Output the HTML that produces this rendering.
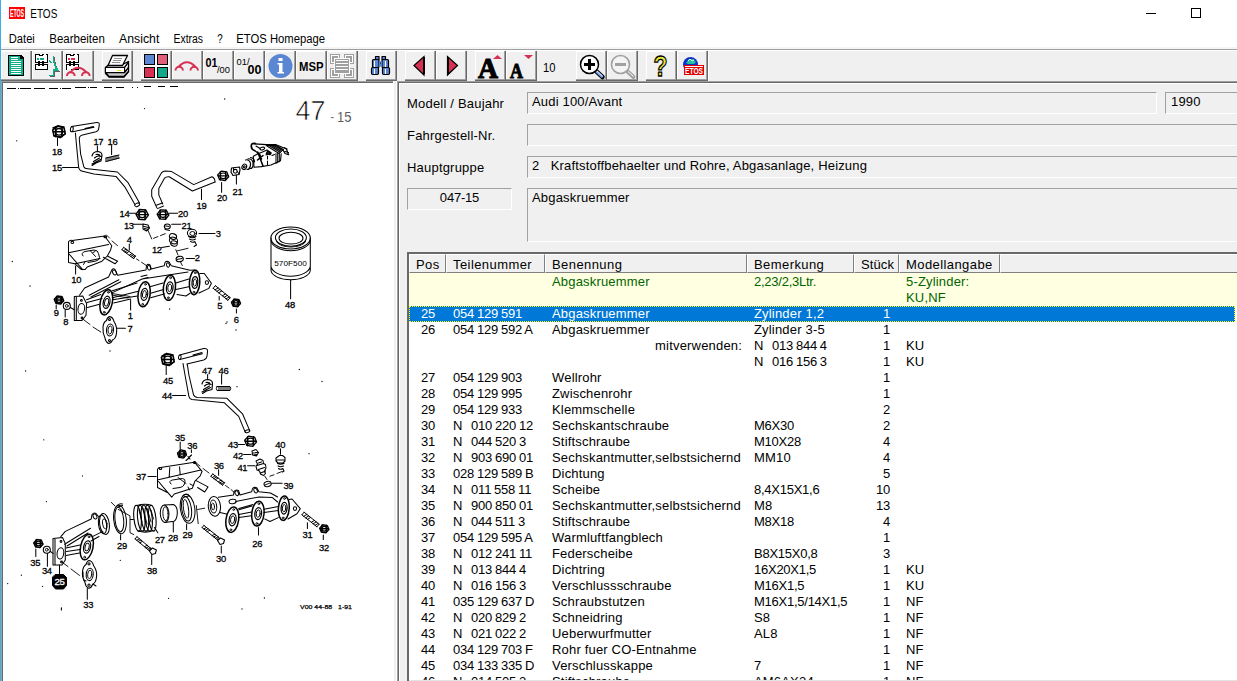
<!DOCTYPE html>
<html lang="de"><head><meta charset="utf-8"><title>ETOS</title>
<style>
*{box-sizing:border-box;margin:0;padding:0}
html,body{width:1237px;height:681px;overflow:hidden;background:#fff}
body{position:relative;font-family:"Liberation Sans",sans-serif;font-size:13px;color:#000}
.abs{position:absolute}
#edge{left:0;top:0;width:1px;height:681px;background:#3cb0ee}
#ticon{left:9px;top:7px;width:16px;height:12px;background:#f00;color:#fff;font-size:9px;line-height:12px;font-weight:bold;text-align:center;letter-spacing:-1px;overflow:hidden}
#title{left:30px;top:6px;font-size:12px;line-height:16px;letter-spacing:-1.2px}
.menu{top:31px;font-size:12px;line-height:16px;white-space:nowrap}
#tbar{left:1px;top:48px;width:1236px;height:33px;background:#f0f0f0;border-top:1px solid #a0a0a0}
.tb{position:absolute;top:51px;width:31px;height:30px;background:#f0f0f0;border-top:1px solid #fff;border-left:1px solid #fff;border-right:2px solid #808080;border-bottom:2px solid #808080}
.tb svg{position:absolute;left:0;top:0}
/* left panel */
#lp{left:1px;top:81px;width:392px;height:600px;background:#fff;border-top:1px solid #a0a0a0;border-left:1px solid #a0a0a0}
#lp:before{content:"";position:absolute;left:0;top:0;right:0;bottom:0;border-top:1px solid #696969;border-left:1px solid #696969}
#split{left:393px;top:81px;width:4px;height:600px;background:#f0f0f0;border-left:1px solid #fff;border-right:1px solid #fff}
#rp:after{content:"";position:absolute;left:1px;top:1px;right:0;bottom:0;border-top:1px solid #fff;border-left:1px solid #fff}
#rp{left:397px;top:81px;width:840px;height:600px;background:#f0f0f0;border-top:1px solid #a0a0a0;border-left:1px solid #a0a0a0}
#rp:before{content:"";position:absolute;left:0;top:0;right:0;bottom:0;border-top:1px solid #696969;border-left:1px solid #696969}
.lbl{font-size:13px;line-height:16px;letter-spacing:.2px;white-space:nowrap}
.fld{height:22px;border-top:1px solid #a0a0a0;border-left:1px solid #a0a0a0;border-bottom:1px solid #fff;border-right:1px solid #fff;font-size:13px;line-height:16px;padding:1px 0 0 4px;letter-spacing:.17px;white-space:nowrap;overflow:hidden}
/* list */
#lv{left:407px;top:252px;width:830px;height:429px;background:#fff;border-top:2px solid #696969;border-left:2px solid #696969}
.hd{position:absolute;top:254px;height:19px;background:#f0f0f0;border-top:1px solid #fff;border-left:1px solid #fff;border-right:1px solid #808080;border-bottom:1px solid #808080;font-size:13px;line-height:16px;padding:2px 0 0 6px;letter-spacing:.42px;white-space:nowrap}
.row{position:absolute;left:409px;width:826px;height:16px;font-size:13px;line-height:16px;white-space:nowrap;letter-spacing:.18px}
.row span{position:absolute;top:0}
.c1{left:0;width:26px;text-align:right;letter-spacing:-.23px}
.c2{left:44px;letter-spacing:-.23px;word-spacing:-.4px}
.c3{left:143px}
.c4{left:345px}
.c5{left:440px;width:41px;text-align:right;letter-spacing:-.23px}
.dg{letter-spacing:-.25px;word-spacing:-.4px}
.c6{left:497px}
.g{color:#006400}
.sel{background:#0078d7;color:#fff;outline:1px dotted #ff0;outline-offset:-1px}
</style></head><body>
<div id="edge" class="abs"></div>
<svg class="abs" style="left:0;top:0" width="400" height="47" viewBox="0 0 400 47" font-family="'Liberation Sans',sans-serif" font-size="12">
<rect x="9" y="7" width="16" height="12" fill="#f00"/>
<text x="10" y="17" font-size="10" font-weight="bold" fill="#fff" textLength="14" lengthAdjust="spacingAndGlyphs">ETOS</text>
<text x="30.300" y="17.500" textLength="27" lengthAdjust="spacingAndGlyphs">ETOS</text>
<text x="8.800" y="42.500" textLength="26" lengthAdjust="spacingAndGlyphs">Datei</text>
<text x="49.300" y="42.500" textLength="55.500" lengthAdjust="spacingAndGlyphs">Bearbeiten</text>
<text x="119" y="42.500" textLength="40.300" lengthAdjust="spacingAndGlyphs">Ansicht</text>
<text x="173.500" y="42.500" textLength="29.500" lengthAdjust="spacingAndGlyphs">Extras</text>
<text x="217.300" y="42.500" textLength="5.500" lengthAdjust="spacingAndGlyphs">?</text>
<text x="236.300" y="42.500" textLength="88.700" lengthAdjust="spacingAndGlyphs">ETOS Homepage</text>
</svg>
<!-- window controls -->
<div class="abs" style="left:1146px;top:13px;width:10px;height:1px;background:#000"></div>
<div class="abs" style="left:1191px;top:8px;width:10px;height:10px;border:1px solid #000"></div>
<svg class="abs" style="left:0;top:47px" width="1237" height="36" viewBox="0 47 1237 36" shape-rendering="crispEdges" font-family="'Liberation Sans',sans-serif">
<rect x="1" y="47" width="1236" height="2" fill="#f4f4f4"/>
<rect x="1" y="49" width="1236" height="1" fill="#a0a0a0"/>
<rect x="1" y="50" width="1236" height="1" fill="#fff"/>
<rect x="1" y="51" width="1236" height="30" fill="#f0f0f0"/>
<rect x="1" y="51" width="31" height="30" fill="#696969"/><rect x="1" y="51" width="30" height="29" fill="#a0a0a0"/><rect x="1" y="51" width="29" height="28" fill="#fff"/><rect x="2" y="52" width="28" height="27" fill="#f0f0f0"/>
<rect x="32" y="51" width="31" height="30" fill="#696969"/><rect x="32" y="51" width="30" height="29" fill="#a0a0a0"/><rect x="32" y="51" width="29" height="28" fill="#fff"/><rect x="33" y="52" width="28" height="27" fill="#f0f0f0"/>
<rect x="63" y="51" width="31" height="30" fill="#696969"/><rect x="63" y="51" width="30" height="29" fill="#a0a0a0"/><rect x="63" y="51" width="29" height="28" fill="#fff"/><rect x="64" y="52" width="28" height="27" fill="#f0f0f0"/>
<rect x="102" y="51" width="31" height="30" fill="#696969"/><rect x="102" y="51" width="30" height="29" fill="#a0a0a0"/><rect x="102" y="51" width="29" height="28" fill="#fff"/><rect x="103" y="52" width="28" height="27" fill="#f0f0f0"/>
<rect x="141" y="51" width="31" height="30" fill="#696969"/><rect x="141" y="51" width="30" height="29" fill="#a0a0a0"/><rect x="141" y="51" width="29" height="28" fill="#fff"/><rect x="142" y="52" width="28" height="27" fill="#f0f0f0"/>
<rect x="172" y="51" width="31" height="30" fill="#696969"/><rect x="172" y="51" width="30" height="29" fill="#a0a0a0"/><rect x="172" y="51" width="29" height="28" fill="#fff"/><rect x="173" y="52" width="28" height="27" fill="#f0f0f0"/>
<rect x="203" y="51" width="31" height="30" fill="#696969"/><rect x="203" y="51" width="30" height="29" fill="#a0a0a0"/><rect x="203" y="51" width="29" height="28" fill="#fff"/><rect x="204" y="52" width="28" height="27" fill="#f0f0f0"/>
<rect x="234" y="51" width="31" height="30" fill="#696969"/><rect x="234" y="51" width="30" height="29" fill="#a0a0a0"/><rect x="234" y="51" width="29" height="28" fill="#fff"/><rect x="235" y="52" width="28" height="27" fill="#f0f0f0"/>
<rect x="265" y="51" width="31" height="30" fill="#696969"/><rect x="265" y="51" width="30" height="29" fill="#a0a0a0"/><rect x="265" y="51" width="29" height="28" fill="#fff"/><rect x="266" y="52" width="28" height="27" fill="#f0f0f0"/>
<rect x="296" y="51" width="31" height="30" fill="#696969"/><rect x="296" y="51" width="30" height="29" fill="#a0a0a0"/><rect x="296" y="51" width="29" height="28" fill="#fff"/><rect x="297" y="52" width="28" height="27" fill="#f0f0f0"/>
<rect x="327" y="51" width="31" height="30" fill="#696969"/><rect x="327" y="51" width="30" height="29" fill="#a0a0a0"/><rect x="327" y="51" width="29" height="28" fill="#fff"/><rect x="328" y="52" width="28" height="27" fill="#f0f0f0"/>
<rect x="366" y="51" width="31" height="30" fill="#696969"/><rect x="366" y="51" width="30" height="29" fill="#a0a0a0"/><rect x="366" y="51" width="29" height="28" fill="#fff"/><rect x="367" y="52" width="28" height="27" fill="#f0f0f0"/>
<rect x="405" y="51" width="31" height="30" fill="#696969"/><rect x="405" y="51" width="30" height="29" fill="#a0a0a0"/><rect x="405" y="51" width="29" height="28" fill="#fff"/><rect x="406" y="52" width="28" height="27" fill="#f0f0f0"/>
<rect x="436" y="51" width="31" height="30" fill="#696969"/><rect x="436" y="51" width="30" height="29" fill="#a0a0a0"/><rect x="436" y="51" width="29" height="28" fill="#fff"/><rect x="437" y="52" width="28" height="27" fill="#f0f0f0"/>
<rect x="475" y="51" width="31" height="30" fill="#696969"/><rect x="475" y="51" width="30" height="29" fill="#a0a0a0"/><rect x="475" y="51" width="29" height="28" fill="#fff"/><rect x="476" y="52" width="28" height="27" fill="#f0f0f0"/>
<rect x="506" y="51" width="31" height="30" fill="#696969"/><rect x="506" y="51" width="30" height="29" fill="#a0a0a0"/><rect x="506" y="51" width="29" height="28" fill="#fff"/><rect x="507" y="52" width="28" height="27" fill="#f0f0f0"/>
<rect x="576" y="51" width="31" height="30" fill="#696969"/><rect x="576" y="51" width="30" height="29" fill="#a0a0a0"/><rect x="576" y="51" width="29" height="28" fill="#fff"/><rect x="577" y="52" width="28" height="27" fill="#f0f0f0"/>
<rect x="607" y="51" width="31" height="30" fill="#696969"/><rect x="607" y="51" width="30" height="29" fill="#a0a0a0"/><rect x="607" y="51" width="29" height="28" fill="#fff"/><rect x="608" y="52" width="28" height="27" fill="#f0f0f0"/>
<rect x="646" y="51" width="31" height="30" fill="#696969"/><rect x="646" y="51" width="30" height="29" fill="#a0a0a0"/><rect x="646" y="51" width="29" height="28" fill="#fff"/><rect x="647" y="52" width="28" height="27" fill="#f0f0f0"/>
<rect x="677" y="51" width="31" height="30" fill="#696969"/><rect x="677" y="51" width="30" height="29" fill="#a0a0a0"/><rect x="677" y="51" width="29" height="28" fill="#fff"/><rect x="678" y="52" width="28" height="27" fill="#f0f0f0"/>
<rect x="708" y="51" width="1" height="30" fill="#fff"/>
<path d="M8 55h13l3 3v18h-16z" fill="#000"/>
<path d="M9 56h11v3h3v16h-14z" fill="#12ae8c"/>
<rect x="11" y="57" width="7" height="1" fill="#fff"/>
<rect x="11" y="59" width="7" height="1" fill="#fff"/>
<rect x="11" y="61" width="10" height="1" fill="#fff"/>
<rect x="11" y="63" width="10" height="1" fill="#fff"/>
<rect x="11" y="65" width="10" height="1" fill="#fff"/>
<rect x="11" y="67" width="10" height="1" fill="#fff"/>
<rect x="11" y="69" width="10" height="1" fill="#fff"/>
<rect x="11" y="71" width="10" height="1" fill="#fff"/>
<rect x="11" y="73" width="10" height="1" fill="#fff"/>
<rect x="35.5" y="54.500" width="12" height="8" fill="#fff" stroke="#000"/><rect x="40" y="54" width="2" height="1" fill="#fff"/><rect x="44" y="54" width="2" height="1" fill="#fff"/><rect x="39" y="55" width="4" height="1" fill="#000"/><rect x="37" y="58" width="2" height="2" fill="#12ae8c"/><rect x="40" y="58" width="4" height="2" fill="#12ae8c"/><rect x="35.5" y="64.500" width="12" height="5" fill="#fff" stroke="#000"/><path d="M38 61h2v1h2v-1h2v5h-2v-1h-2v1h-2z" fill="#000"/><rect x="40" y="63" width="2" height="1" fill="#fff"/>
<path d="M54.500 57v5l1 2v1.500l1 1.500v1.500l1 1l1 1.500h-4v5.500h-5" fill="none" stroke="#606060" stroke-width="1.500"/>
<path d="M53.500 56v5l1 2v1.500l1 1.500v1.500l1 1l1 1.500h-4v5.500h-5" fill="none" stroke="#12ae8c" stroke-width="1.800"/>
<path d="M49.500 60.500l1.500 2.500" stroke="#12ae8c" stroke-width="1.500"/>
<rect x="66.5" y="54.500" width="12" height="8" fill="#fff" stroke="#000"/><rect x="71" y="54" width="2" height="1" fill="#fff"/><rect x="75" y="54" width="2" height="1" fill="#fff"/><rect x="70" y="55" width="4" height="1" fill="#000"/><rect x="68" y="58" width="2" height="2" fill="#d63052"/><rect x="71" y="58" width="4" height="2" fill="#d63052"/><rect x="66.5" y="64.500" width="12" height="5" fill="#fff" stroke="#000"/><path d="M69 61h2v1h2v-1h2v5h-2v-1h-2v1h-2z" fill="#000"/><rect x="71" y="63" width="2" height="1" fill="#fff"/>
<g shape-rendering="auto" fill="none" stroke="#d63052" stroke-width="2"><path d="M67 76a3.800 3.800 0 0 1 7.600 0"/><path d="M82 76a3.800 3.800 0 0 1 7.600 0"/><path d="M70 72.500q8 -9.500 16.500 0"/></g>
<rect x="67" y="69" width="4" height="2" fill="#f0f0f0"/>
<g shape-rendering="auto" stroke="#000" stroke-width="1.300" stroke-linejoin="round"><path d="M105.500 67.500l4 -3.500h14l5 -2.500v10l-4.500 5.500h-15l-3.500 -3.500z" fill="#fff"/><path d="M106 72.500h18l4 -5v4.500l-4.500 5h-14.500z" fill="#c8c8c8" stroke="none"/><path d="M105.500 67.500h19v5h-19zM124.500 67.500l4-5.500M124.500 72.500l4-5M105.500 72.500l3.500 4h15l4.500-5" fill="none"/><path d="M112.500 55.500h15l-5 10h-14.500z" fill="#fff"/></g>
<rect x="106" y="68" width="18" height="4" fill="#fff"/>
<rect x="117" y="70" width="4" height="1" fill="#e0e020"/>
<rect x="114" y="58" width="8" height="1" fill="#909090"/><rect x="113" y="60" width="8" height="1" fill="#909090"/><rect x="112" y="62" width="8" height="1" fill="#909090"/>
<rect x="143" y="53" width="26" height="26" fill="#fafafa"/>
<rect x="144" y="54" width="11" height="11" fill="#000"/><rect x="145" y="55" width="9" height="9" fill="#5b87d2"/>
<rect x="157" y="54" width="11" height="11" fill="#000"/><rect x="158" y="55" width="9" height="9" fill="#e0607c"/>
<rect x="144" y="67" width="11" height="11" fill="#000"/><rect x="145" y="68" width="9" height="9" fill="#d63052"/>
<rect x="157" y="67" width="11" height="11" fill="#000"/><rect x="158" y="68" width="9" height="9" fill="#10a888"/>
<g shape-rendering="auto" fill="none" stroke="#d63052" stroke-width="2"><path d="M175.500 70.500a3.700 3.700 0 0 1 7.400 0"/><path d="M190.500 70.500a3.700 3.700 0 0 1 7.400 0"/><path d="M178.500 67q8.500 -9.500 17 0"/></g>
<g shape-rendering="auto"><text x="205.500" y="67" font-size="12.500" font-weight="bold" textLength="12" lengthAdjust="spacingAndGlyphs">01</text><text x="217" y="73" font-size="8.500" textLength="13" lengthAdjust="spacingAndGlyphs">/00</text>
<text x="236.500" y="65" font-size="8.500" textLength="13" lengthAdjust="spacingAndGlyphs">01/</text><text x="247.500" y="74" font-size="12.500" font-weight="bold" textLength="14" lengthAdjust="spacingAndGlyphs">00</text></g>
<g shape-rendering="auto"><circle cx="280.500" cy="66" r="12" fill="#5b87d2"/><path d="M278.500 58h4v3h-4zM277.500 63h5v9h1.500v1.500h-6.500v-1.500h1.500v-7.500h-1.500z" fill="#fff"/></g>
<text shape-rendering="auto" x="299" y="70.500" font-size="12.500" font-weight="bold" textLength="24.500" lengthAdjust="spacingAndGlyphs">MSP</text>
<rect x="330" y="54" width="10" height="10" fill="#a0a0a0"/><rect x="331" y="55" width="8" height="8" fill="#fff"/><rect x="332" y="56" width="6" height="6" fill="#a0a0a0"/>
<rect x="344" y="54" width="10" height="10" fill="#a0a0a0"/><rect x="345" y="55" width="8" height="8" fill="#fff"/><rect x="346" y="56" width="6" height="6" fill="#a0a0a0"/>
<rect x="330" y="68" width="10" height="10" fill="#a0a0a0"/><rect x="331" y="69" width="8" height="8" fill="#fff"/><rect x="332" y="70" width="6" height="6" fill="#a0a0a0"/>
<rect x="344" y="68" width="10" height="10" fill="#a0a0a0"/><rect x="345" y="69" width="8" height="8" fill="#fff"/><rect x="346" y="70" width="6" height="6" fill="#a0a0a0"/>
<rect x="334" y="58" width="16" height="16" fill="#fff"/><rect x="335" y="59" width="14" height="14" fill="#a0a0a0"/><rect x="336" y="60" width="12" height="12" fill="#fff"/>
<rect x="336" y="61" width="12" height="2" fill="#a0a0a0"/>
<rect x="336" y="64" width="12" height="2" fill="#a0a0a0"/>
<rect x="336" y="67" width="12" height="2" fill="#a0a0a0"/>
<rect x="336" y="70" width="12" height="2" fill="#a0a0a0"/>
<g shape-rendering="auto" stroke="#000" stroke-width="1.200" fill="#5b87d2" stroke-linejoin="round"><rect x="375.500" y="56.500" width="3.500" height="3"/><rect x="382" y="56.500" width="3.500" height="3"/><rect x="372.500" y="59.500" width="6.500" height="8" rx="1"/><rect x="382" y="59.500" width="6.500" height="8" rx="1"/><rect x="379" y="61.500" width="3" height="5" stroke="none"/><rect x="380" y="62.500" width="1" height="1" fill="#000" stroke="none"/><rect x="371.500" y="67.500" width="7" height="7" rx="1.200"/><rect x="382.500" y="67.500" width="7" height="7" rx="1.200"/></g>
<rect x="374" y="61" width="1" height="6" fill="#fff"/>
<rect x="384.5" y="61" width="1" height="6" fill="#fff"/>
<rect x="373.5" y="68.500" width="1.200" height="5.500" fill="#fff"/>
<rect x="385" y="68.500" width="1.200" height="5.500" fill="#fff"/>
<g shape-rendering="auto" stroke="#000" stroke-width="1.200" fill="#d63052" stroke-linejoin="miter"><path d="M414 65.500l10 -9v18.500z"/><path d="M457.500 65.500l-10 -9v18.500z"/></g>
<rect x="423" y="57" width="2" height="17" fill="#000"/><rect x="447" y="57" width="2" height="17" fill="#000"/>
<g shape-rendering="auto" font-family="'Liberation Serif',serif" font-weight="bold"><text x="478" y="77.500" font-size="30" textLength="20" lengthAdjust="spacingAndGlyphs" stroke="#000" stroke-width="1.200">A</text><text x="510" y="77.500" font-size="21" textLength="13" lengthAdjust="spacingAndGlyphs" stroke="#000" stroke-width=".900">A</text></g>
<g shape-rendering="auto" fill="#d63052"><path d="M493 59l4.500 -4 4.500 4z"/><path d="M524 55h9l-4.500 4z"/></g>
<text shape-rendering="auto" x="543" y="71.700" font-size="12.500" textLength="12.500" lengthAdjust="spacingAndGlyphs">10</text>
<g shape-rendering="auto"><path d="M596 71l6.500 6" stroke="#000" stroke-width="4.500" stroke-linecap="round"/><path d="M596.500 71.500l5.500 5" stroke="#78a0e8" stroke-width="2.500" stroke-linecap="round"/><path d="M597 71l5.500 5" stroke="#fff" stroke-width="0.800"/><circle cx="589.500" cy="64.500" r="9" fill="#fff" stroke="#000" stroke-width="1.500"/></g>
<rect x="584" y="63" width="11" height="3" fill="#000"/><rect x="588" y="59" width="3" height="11" fill="#000"/>
<g shape-rendering="auto"><path d="M627 71l6.500 6" stroke="#a0a0a0" stroke-width="4" stroke-linecap="round"/><path d="M628 71.500l5.500 5" stroke="#fff" stroke-width="1"/><circle cx="620.500" cy="64.500" r="9" fill="#f4f4f4" stroke="#a0a0a0" stroke-width="1.600"/></g>
<rect x="615" y="63" width="11" height="3" fill="#a0a0a0"/>
<text shape-rendering="auto" x="653.500" y="76" font-size="29" font-weight="bold" fill="#e6e63c" stroke="#000" stroke-width="1.300" textLength="14" lengthAdjust="spacingAndGlyphs">?</text>
<g shape-rendering="auto"><circle cx="690.500" cy="64.500" r="7.500" fill="#1030c8"/><path d="M686 63l3-4h4l3 3-2 2h-6z" fill="#20c0a0"/><path d="M688 61l2-2 2 2 2-1" stroke="#d0ffe8" stroke-width="1" fill="none"/><rect x="684" y="65" width="20" height="10" fill="#e00000"/><rect x="685" y="66" width="18" height="1" fill="#fff"/><text x="685" y="74" font-size="9" font-weight="bold" fill="#fff" textLength="18" lengthAdjust="spacingAndGlyphs">ETOS</text></g>
</svg>
<div id="lp" class="abs"></div>
<svg class="abs" style="left:3px;top:83px" width="389" height="598" viewBox="3 83 389 598" fill="none" stroke="#000" stroke-linecap="round" stroke-linejoin="round" font-family="'Liberation Sans',sans-serif">
<style>.lb{fill:#000;stroke:#000;stroke-width:.3px;letter-spacing:-.3px}</style>
<path d="M7 88.5L16 88.5M17.5 88.5L18.5 88.5M20 88.5L31 88.5M34 88.5L45 88.5M48.5 88.5L58 88.5M59.5 88.5L60.5 88.5M62 88.5L71 88.5M75 87.5L86 87.5M87.5 87.5L88.5 87.5M90 87.5L97 87.5M103.5 87.5L111.5 87.5M115.6 87.5L123.7 87.5M132 87.5L133 87.5M137 87.5L138 87.5M144 86.5L151 86.5M157.6 86.5L165 86.5M170 86.5L178 86.5" stroke-width="1" stroke-linecap="butt" shape-rendering="crispEdges"/>
<text x="295.500" y="119.500" font-size="27.500" fill="#000" stroke="#fff" stroke-width=".700" textLength="30" lengthAdjust="spacingAndGlyphs">47</text>
<text x="330.500" y="121.500" font-size="15" fill="#111" textLength="3.500" lengthAdjust="spacingAndGlyphs" stroke="#fff" stroke-width=".500">-</text><text x="337" y="121.500" font-size="15" fill="#111" stroke="#fff" stroke-width=".300" textLength="14.500" lengthAdjust="spacingAndGlyphs">15</text>
<path d="M224.7 99h.01M144.5 108.6h.01M16.7 140.8h.01M12.3 261.5h.01M30 286h.01M169.6 309h.01M227 322h.01M110 351h.01M25.6 371h.01M299.3 369.5h.01M322 381.5h.01M237 386.7h.01M309 453.7h.01M43.8 439.8h.01M82.5 475.9h.01M46.4 501.6h.01M120.3 560.3h.01M7.7 583.6h.01M21.4 575.2h.01M42.6 586.3h.01M168.5 598.3h.01M264.4 598h.01M242 608.9h.01M236 330h.01M226 323.5h.01" stroke-width="1.300"/>
<path d="M71.500 126.600L96.700 122.500Q99.500 122.300 99.300 124.700L98.700 128.600Q98.500 131 96 131.800L82.500 135Q79 136 79.300 139L80.600 153.800L83.800 166.700Q84.500 168.500 87.700 168.700L117.400 172L127.800 182.300L139.400 202.700" stroke-width="1.03" />
<path d="M72.800 131.800L94 127.300M85 128.500L93.500 126.400" stroke-width="1.03" />
<path d="M75.400 133L76.700 147.300L78.600 166.700Q79 170.500 82.500 171.300L94 173.900L116 176.400L125.200 187.400L134.900 204.600" stroke-width="1.03" />
<ellipse cx="71.8" cy="129.2" rx="1.4" ry="2.6" stroke-width="1.03" fill="none" transform="rotate(8 71.8 129.2)"/>
<ellipse cx="137.2" cy="204.8" rx="2.5" ry="1.6" stroke-width="1.03" fill="none" transform="rotate(-25 137.2 204.8)"/>
<path d="M65.2 133.8L60.1 137.6L53.9 135.6L52.8 129.8L57.9 126.0L64.1 128.0Z" stroke-width="1.6"/><ellipse cx="59" cy="131.8" rx="3.63" ry="3.3" stroke-width="1.44" fill="none"/><path d="M55.7 126.9L55.7 136.8M62.0 126.9L62.0 136.8M53.1 131.8L64.9 131.8" stroke-width="1.6"/>
<path d="M53 128l5 -2 6 1M54 136l6 1 5 -3" stroke-width="1.44" />
<path d="M57.5 138L57.5 145.4" stroke-width="1.03"/>
<text x="57" y="155" text-anchor="middle" font-size="9.4" class="lb">18</text>
<text x="57" y="171.3" text-anchor="middle" font-size="9.4" class="lb">15</text>
<path d="M62.5 167.4L78 167.4" stroke-width="1.03"/>
<text x="98.3" y="145.3" text-anchor="middle" font-size="9.4" class="lb">17</text>
<path d="M97.4 146L97.4 151" stroke-width="1.03"/>
<text x="112.5" y="144.6" text-anchor="middle" font-size="9.4" class="lb">16</text>
<path d="M111.6 145.4L111.6 154.5" stroke-width="1.03"/>
<path d="M92 156q1 -4.500 6 -4.500q4 .500 4 4l-1 5.500l-5 2l-4 2.500M94.500 158q3 -3 6.500 -1.500M93.500 161.500l6 -3.500M92 164l8.500 -4.500M96 154.500q3.500 -.500 4.500 2" stroke-width="1.17" />
<path d="M106 161.500l13.500 -3.500M106 158l0 3.500M108 157.500v3.500M110 157v3.500M112 156.500v3.500M114 156v3.500M116 155.500v3.500M118 155.500v2.500M106 158l13 -3" stroke-width="0.99" />
<path d="M156.900 207.900L151.700 196.200L151.700 189.800L161.400 172.900Q163 171 165.300 171L171.700 171.600L193.700 184.600L211.900 176.800Q215 178 215 182" stroke-width="1.03" />
<path d="M162.700 204L158.800 194.900L158.800 188.500L164.600 178.100Q166 176.500 169.200 176.800L192.400 191L215 182" stroke-width="1.03" />
<path d="M156.300 205.300L162.300 203M157.500 208.600L163.500 206" stroke-width="1.03" />
<path d="M201.5 189L201.5 199.5" stroke-width="1.03"/>
<text x="201.5" y="208.8" text-anchor="middle" font-size="9.4" class="lb">19</text>
<path d="M228.7 176.7L225.1 180.5L219.6 179.7L217.7 174.9L221.3 171.1L226.8 171.9Z" stroke-width="1.3"/><ellipse cx="223.2" cy="175.8" rx="3.08" ry="2.8" stroke-width="1.17" fill="none"/><path d="M220.4 171.6L220.4 180.0M225.7 171.6L225.7 180.0M218.2 175.8L228.2 175.8" stroke-width="1.3"/>
<path d="M221.6 182.6L221.6 192.3" stroke-width="1.03"/>
<text x="222" y="201" text-anchor="middle" font-size="9.4" class="lb">20</text>
<path d="M231.500 168L239.500 167L240 170L239 174.500L233 175.500L231 172Z" stroke-width="1.17" />
<ellipse cx="235.3" cy="171.3" rx="1.9" ry="1.9" stroke-width="1.08" fill="none"/>
<path d="M233.500 168v3M237.500 171.500l1.500 2.500" stroke-width="0.99" />
<path d="M236.4 175L236.4 184" stroke-width="1.03"/>
<text x="237.5" y="195.2" text-anchor="middle" font-size="9.4" class="lb">21</text>
<path d="M255.500 143.500Q251 142.500 251.300 146.500Q251.500 149.500 254.500 150.500" stroke-width="1.71" />
<path d="M254 143.800L266.500 144.600L275.500 144.500L286.400 149L288.600 154.800L285 153.500L283 150M284 147.500l3 1.500M285 151.500l3.500 1" stroke-width="1.17" />
<path d="M266.500 144.900L275.300 144.900" stroke-width="1.98" />
<path d="M267 146L279 153.500M269 145.500L280.500 152.500M271.500 145.500L281.500 151.500M274 145.500L282.500 150.500M276.500 145.500L283.500 149.800" stroke-width="1.03" />
<path d="M254.500 150.500L258.500 153.500L262.500 152L267 150L270.500 152.500L266 155M256 146L260 148.500M253.300 156.300L258 153.800M253.300 156.300L254 167.300L261.400 166.600L271 165L280.500 160.700L281.200 153.800" stroke-width="1.12" />
<ellipse cx="262.3" cy="148.6" rx="2.4" ry="1.3" stroke-width="1.08" fill="none" transform="rotate(-15 262.3 148.6)"/>
<path d="M267.500 151.500l3.500 1.500l-1 1.500l-3.500 -1z" stroke-width="1.62" />
<path d="M257.700 152L262.900 165.800M263 155.500L257.500 160M259.500 154l2 5" stroke-width="1.53" />
<path d="M276 153.500V163.500M277.700 153V162.800M279.300 152.500V161.800M267.500 156v3M267.500 161v4M272 155.500l2.500 -1" stroke-width="1.03" />
<path d="M245.500 160Q249 159 250.500 163Q251 167 248.500 169.500M248 158.700Q252 158.500 253 162.500Q253.500 166.500 251.500 168.500M250.500 157.500Q254.500 158 254.600 162M247 169.500l5 -1.500" stroke-width="1.08" />
<ellipse cx="244.3" cy="166.8" rx="2.2" ry="2.8" stroke-width="1.08" fill="none" transform="rotate(30 244.3 166.8)"/>
<ellipse cx="244.3" cy="166.8" rx="0.8" ry="1.1" stroke-width="0.99" fill="none" transform="rotate(30 244.3 166.8)"/>
<path d="M148.4 215.1L144.8 219.7L138.6 219.2L136.0 214.1L139.6 209.5L145.8 210.0Z" stroke-width="1.4"/><ellipse cx="142.2" cy="214.6" rx="3.4100000000000006" ry="3.1" stroke-width="1.26" fill="none"/><path d="M139.1 209.9L139.1 219.2M145.0 209.9L145.0 219.2M136.6 214.6L147.8 214.6" stroke-width="1.4"/>
<path d="M129.5 213.3L136 213.3" stroke-width="1.03"/>
<text x="124.5" y="217.3" text-anchor="middle" font-size="9.4" class="lb">14</text>
<path d="M143 224l5 1l1.500 3l-3 3l-3.500 -2zM144 226.500l4.500 1M144.500 228.500l3.500 .800" stroke-width="1.08" />
<path d="M133.5 224.3L143 224.3" stroke-width="1.03"/>
<text x="128.8" y="228.8" text-anchor="middle" font-size="9.4" class="lb">13</text>
<path d="M168.8 215.1L165.5 219.3L159.7 218.9L157.2 214.1L160.5 209.9L166.3 210.3Z" stroke-width="1.4"/><ellipse cx="163" cy="214.6" rx="3.19" ry="2.9" stroke-width="1.26" fill="none"/><path d="M160.1 210.2L160.1 218.9M165.6 210.2L165.6 218.9M157.8 214.6L168.2 214.6" stroke-width="1.4"/>
<path d="M168.8 213.3L177.6 213.3" stroke-width="1.03"/>
<text x="183" y="217.3" text-anchor="middle" font-size="9.4" class="lb">20</text>
<ellipse cx="167.3" cy="226.5" rx="3" ry="2.5" stroke-width="1.08" fill="none"/>
<path d="M165 229.500l4.500 1M165.500 226l3.500 .500" stroke-width="0.99" />
<path d="M171.7 224.3L180.8 224.3" stroke-width="1.03"/>
<text x="186.5" y="228.8" text-anchor="middle" font-size="9.4" class="lb">21</text>
<ellipse cx="192" cy="233" rx="4.6" ry="3.8" stroke-width="1.12" fill="none"/>
<ellipse cx="192.5" cy="233.5" rx="2.6" ry="2" stroke-width="0.99" fill="none"/>
<path d="M188.500 236.500q4 2.500 7.500 0M189.500 239q3 2 6 0M190.500 241.500q2.500 1.500 4.500 0M195 242l1.500 3l-2.500 1.500" stroke-width="1.03" />
<path d="M199 233.4L215 233.4" stroke-width="1.03"/>
<text x="218.2" y="237" text-anchor="middle" font-size="9.4" class="lb">3</text>
<ellipse cx="173" cy="236.5" rx="3.6" ry="2.8" stroke-width="1.08" fill="none" transform="rotate(20 173 236.5)"/>
<ellipse cx="173.5" cy="240.5" rx="4.2" ry="3.2" stroke-width="1.08" fill="none" transform="rotate(20 173.5 240.5)"/>
<ellipse cx="174" cy="243.5" rx="3.4" ry="2.6" stroke-width="1.08" fill="none" transform="rotate(20 174 243.5)"/>
<path d="M161.6 247.6L169.4 246.3" stroke-width="1.03"/>
<text x="156.8" y="253" text-anchor="middle" font-size="9.4" class="lb">12</text>
<ellipse cx="179.7" cy="259" rx="3.6" ry="2.7" stroke-width="1.12" fill="none" transform="rotate(-10 179.7 259)"/>
<path d="M177 259.500l5 -1" stroke-width="0.99" />
<path d="M186.2 258.4L194.6 258.4" stroke-width="1.03"/>
<text x="197.3" y="261.4" text-anchor="middle" font-size="9.4" class="lb">2</text>
<path d="M147.800 230L151.700 238.900M153.500 238.300L158 236.600M160.500 235.600L165.300 233.700M175.800 249.600L178 255M180.500 262L182.300 265.500M177 250.900L188 248.300M106.500 235L109.500 238M112 241L117.600 245.700M136.500 259L139 260.600M141.500 262.200L147 266" stroke-width="0.9" />
<text x="129.3" y="243.2" text-anchor="middle" font-size="9.4" class="lb">4</text>
<path d="M129.3 244L129.3 250" stroke-width="1.03"/>
<path d="M121.9 249.8L133.7 258.6M123.7 247.4L135.5 256.2M121.9 249.8L123.7 247.4M133.7 258.6L135.5 256.2M123.4 250.9L126.1 249.2M124.9 252.0L127.6 250.3M126.3 253.1L129.1 251.4M129.3 255.3L132.0 253.6M130.8 256.4L133.5 254.7M132.2 257.5L135.0 255.8" stroke-width="1"/>
<path d="M68.500 241.800L68.500 262.500L74.900 263.800L81.400 269.600L85 269.600L87.200 267L102 261.200L107.300 256L110.500 250.200L111.800 245.700L106 238M68.500 241.800Q70 239.500 72.300 240.500L104.700 236Q107.500 236.500 106 238M68.500 252.800L108.600 244.400M103.400 257.300L115 263.800L117.600 261.200L107.300 256M69 254L82.700 269.600M74.900 263.800L100 258.500" stroke-width="1.03" />
<ellipse cx="72.3" cy="242.3" rx="1.4" ry="1.1" stroke-width="1.03" fill="none"/>
<ellipse cx="105.2" cy="236.8" rx="1.3" ry="1" stroke-width="1.03" fill="none"/>
<path d="M83 256q-2.500 -3 2 -4.500l9 -1.500q4 0 4.500 3.500l1 4q0 2.500 -3.500 3.500l-8 1.500M90.500 251l5 5.500M85 262l-1.500 2.500M93 252.500l2 -1" stroke-width="0.99" />
<path d="M75.6 266L75.6 274" stroke-width="1.03"/>
<text x="76.2" y="282.8" text-anchor="middle" font-size="9.4" class="lb">10</text>
<path d="M79.500 295.200L84.600 288L108.600 277L111.800 270Q113 268 115 269.500L117.600 275.200L146 270L146.500 265.500Q148 263.500 150 265L151.300 269L164.200 265.800L165 262.500Q166.500 260.500 169 262L171.300 265.800L190 270.300L195 270" stroke-width="1.03" />
<ellipse cx="114.5" cy="272.5" rx="1.8" ry="2.6" stroke-width="0.99" fill="none" transform="rotate(-25 114.5 272.5)"/>
<ellipse cx="149" cy="267.8" rx="1.5" ry="2.3" stroke-width="0.99" fill="none" transform="rotate(-20 149 267.8)"/>
<ellipse cx="168" cy="265" rx="1.5" ry="2.2" stroke-width="0.99" fill="none" transform="rotate(-20 168 265)"/>
<path d="M89.200 295.200L118.900 279.700M91 297L120.800 281.700M112.400 292.600L142.200 279L188 272M141 276.500l6 -1.500M142 279l6 -1.500" stroke-width="1.03" />
<path d="M86.600 299.800L100.800 294.600M87 302.400L102 298.500M87.500 307.500L99.500 304.300M112.400 290.700L137 283M112.400 297.800L138.300 291.300M112.400 299.800L137.700 295.900M113.700 303L130.600 299M150 286.800L163 283M150.600 293.300L163.500 289.400M150.600 297.800L164.200 293.900M175.800 283L188.800 279M175.800 289.400L188.800 286.800M177 294.600L186 296L190 293.300" stroke-width="1.03" />
<path d="M112 293.500L130 296.500M112 295L128 298" stroke-width="0.9" />
<path d="M74.300 296.500L82.700 295.900L86.600 303.600L86 315.300L82 320.500L74.300 320.500ZM76.300 297L76.300 320" stroke-width="1.03" />
<ellipse cx="81.3" cy="308.8" rx="3.3" ry="5.4" stroke-width="1.03" fill="none" transform="rotate(8 81.3 308.8)"/>
<ellipse cx="81.4" cy="300.4" rx="0.9" ry="0.9" stroke-width="1.03" fill="none"/>
<ellipse cx="82" cy="318" rx="0.9" ry="0.9" stroke-width="1.03" fill="none"/>
<ellipse cx="106.3" cy="302.3" rx="6" ry="12.8" stroke-width="1.5" fill="none" transform="rotate(12 106.3 302.3)"/><ellipse cx="106.6" cy="302.3" rx="3.3000000000000003" ry="6.144" stroke-width="1.24" fill="none" transform="rotate(12 106.6 302.3)"/><ellipse cx="106.6" cy="302.3" rx="1.92" ry="3.84" stroke-width="0.93" fill="none" transform="rotate(12 106.6 302.3)"/><ellipse cx="108.4" cy="292.3" rx="0.9" ry="0.9" stroke-width="0.9" fill="none"/><ellipse cx="104.2" cy="312.3" rx="0.9" ry="0.9" stroke-width="0.9" fill="none"/>
<ellipse cx="144.1" cy="294.3" rx="6" ry="12.6" stroke-width="1.5" fill="none" transform="rotate(8 144.1 294.3)"/><ellipse cx="144.4" cy="294.3" rx="3.3000000000000003" ry="6.048" stroke-width="1.24" fill="none" transform="rotate(8 144.4 294.3)"/><ellipse cx="144.4" cy="294.3" rx="1.92" ry="3.78" stroke-width="0.93" fill="none" transform="rotate(8 144.4 294.3)"/><ellipse cx="145.5" cy="284.3" rx="0.9" ry="0.9" stroke-width="0.9" fill="none"/><ellipse cx="142.7" cy="304.3" rx="0.9" ry="0.9" stroke-width="0.9" fill="none"/>
<ellipse cx="169.4" cy="287.8" rx="6" ry="12.6" stroke-width="1.5" fill="none" transform="rotate(6 169.4 287.8)"/><ellipse cx="169.70000000000002" cy="287.8" rx="3.3000000000000003" ry="6.048" stroke-width="1.24" fill="none" transform="rotate(6 169.70000000000002 287.8)"/><ellipse cx="169.70000000000002" cy="287.8" rx="1.92" ry="3.78" stroke-width="0.93" fill="none" transform="rotate(6 169.70000000000002 287.8)"/><ellipse cx="170.5" cy="277.8" rx="0.9" ry="0.9" stroke-width="0.9" fill="none"/><ellipse cx="168.3" cy="297.8" rx="0.9" ry="0.9" stroke-width="0.9" fill="none"/>
<ellipse cx="194.6" cy="282.5" rx="5.2" ry="12.2" stroke-width="1.5" fill="none" transform="rotate(4 194.6 282.5)"/><ellipse cx="194.9" cy="282.5" rx="2.8600000000000003" ry="5.856" stroke-width="1.24" fill="none" transform="rotate(4 194.9 282.5)"/><ellipse cx="194.9" cy="282.5" rx="1.6640000000000001" ry="3.6599999999999997" stroke-width="0.93" fill="none" transform="rotate(4 194.9 282.5)"/><ellipse cx="195.3" cy="272.8" rx="0.9" ry="0.9" stroke-width="0.9" fill="none"/><ellipse cx="193.9" cy="292.2" rx="0.9" ry="0.9" stroke-width="0.9" fill="none"/>
<path d="M199.800 273.500L204.300 273.500L211.400 283.200L208.800 288.400L199 293" stroke-width="1.03" />
<ellipse cx="206.9" cy="282.6" rx="1.6" ry="1.8" stroke-width="1.03" fill="none"/>
<path d="M63.7 300.8L60.6 304.1L55.9 303.3L54.3 299.2L57.4 295.9L62.1 296.7Z" stroke-width="1.5"/><ellipse cx="59" cy="300" rx="2.64" ry="2.4" stroke-width="1.35" fill="none"/><path d="M56.6 296.4L56.6 303.6M61.2 296.4L61.2 303.6M54.7 300.0L63.3 300.0" stroke-width="1.5"/>
<path d="M56.2 305L56.2 308.8" stroke-width="1.03"/>
<text x="56.2" y="315.6" text-anchor="middle" font-size="9.4" class="lb">9</text>
<ellipse cx="66.8" cy="305.9" rx="3.5" ry="3.5" stroke-width="1.08" fill="none"/>
<ellipse cx="66.8" cy="305.9" rx="1.4" ry="1.4" stroke-width="0.9" fill="none"/>
<path d="M65.2 310L65.2 317" stroke-width="1.03"/>
<text x="65.6" y="324.6" text-anchor="middle" font-size="9.4" class="lb">8</text>
<path d="M70.4 307.5L74.3 309.8" stroke-width="1.03"/>
<path d="M82.700 319L90 324.500M93 327L100.800 332" stroke-width="0.9" />
<path d="M109.500 316.600Q113 317 114 321.500Q117.500 327 116.500 333Q116 338.500 112.500 340Q111 343.500 108.500 343.500Q105.500 342 105 338Q102.500 333 103 327Q103.500 322 106.500 320.500Q107.500 317 109.500 316.600Z" stroke-width="1.08" />
<ellipse cx="110" cy="330" rx="3.5" ry="6" stroke-width="1.08" fill="none" transform="rotate(5 110 330)"/>
<ellipse cx="110" cy="330" rx="2" ry="4" stroke-width="0.9" fill="none" transform="rotate(5 110 330)"/>
<ellipse cx="109.5" cy="319.5" rx="1" ry="1" stroke-width="1.03" fill="none"/>
<ellipse cx="109.5" cy="340.5" rx="1" ry="1" stroke-width="1.03" fill="none"/>
<path d="M117 328.2L125.4 328.2" stroke-width="1.03"/>
<text x="129.9" y="331.6" text-anchor="middle" font-size="9.4" class="lb">7</text>
<path d="M130.6 299.8L130.6 310" stroke-width="1.03"/>
<text x="130.3" y="318.6" text-anchor="middle" font-size="9.4" class="lb">1</text>
<path d="M213.2 288.3L227.9 300.3M215.4 285.7L230.1 297.7M213.2 288.3L215.4 285.7M227.9 300.3L230.1 297.7M215.1 289.8L218.1 287.9M216.9 291.3L220.0 289.4M218.7 292.8L221.8 290.9M222.4 295.8L225.5 293.9M224.2 297.3L227.3 295.4M226.1 298.8L229.2 296.9" stroke-width="1"/>
<path d="M219.2 296.5L219.2 300" stroke-width="1.03"/>
<text x="219.8" y="308.6" text-anchor="middle" font-size="9.4" class="lb">5</text>
<path d="M240.5 303.6L237.6 306.8L233.0 306.1L231.5 302.2L234.4 299.0L239.0 299.7Z" stroke-width="1.4"/><ellipse cx="236" cy="302.9" rx="2.53" ry="2.3" stroke-width="1.26" fill="none"/><path d="M233.7 299.4L233.7 306.3M238.1 299.4L238.1 306.3M231.9 302.9L240.1 302.9" stroke-width="1.4"/>
<path d="M236.4 309L236.4 313" stroke-width="1.03"/>
<text x="236.2" y="322.8" text-anchor="middle" font-size="9.4" class="lb">6</text>
<ellipse cx="290.6" cy="238" rx="19.7" ry="11" stroke-width="1.03" fill="none"/>
<ellipse cx="290.9" cy="237.6" rx="15.5" ry="8.7" stroke-width="1.03" fill="none"/>
<ellipse cx="291" cy="238.2" rx="12" ry="5.9" stroke-width="1.03" fill="none"/>
<path d="M271 240.500A19.700 11 0 0 0 310.300 240.500M276.500 241.500A15.500 8.500 0 0 0 305.500 241.500" stroke-width="1.03" />
<path d="M271 238L271 270.500M310.300 238L310.300 270.500M271 266.400A19.700 10.500 0 0 0 310.300 266.400M271 270.500A19.700 10 0 0 0 310.300 270.500" stroke-width="1.03" />
<text x="274.300" y="265.800" font-size="6.500" fill="#000" stroke="none" textLength="32.500" lengthAdjust="spacingAndGlyphs">570F500</text>
<path d="M290.6 280.3L290.6 298.7" stroke-width="1.03"/>
<text x="290" y="308" text-anchor="middle" font-size="9.4" class="lb">48</text>
<path d="M179.800 355L203.700 348.500Q207.500 348 207.600 351L207 356.300Q206.500 359 203.700 360L187 364L187.600 366L188.900 375L193.400 394.400Q194 397 197.300 397.600L227 398.300L242.500 413.800L249.700 430.600" stroke-width="1.03" />
<path d="M179.800 359.500L202.400 353.700M193 355L202 352.500" stroke-width="1.03" />
<path d="M183 363.400L185 375L188.900 396.300Q189.500 399 192 399.600L224.400 402.800L238.700 416.400L245.100 431.900" stroke-width="1.03" />
<ellipse cx="179.8" cy="357.2" rx="1.3" ry="2.3" stroke-width="1.03" fill="none" transform="rotate(10 179.8 357.2)"/>
<ellipse cx="247.4" cy="431.3" rx="2.4" ry="1.3" stroke-width="1.03" fill="none" transform="rotate(-15 247.4 431.3)"/>
<path d="M174.2 361.6L169.0 365.5L162.6 363.4L161.4 357.4L166.6 353.5L173.0 355.6Z" stroke-width="1.6"/><ellipse cx="167.8" cy="359.5" rx="3.74" ry="3.4" stroke-width="1.44" fill="none"/><path d="M164.4 354.4L164.4 364.6M170.9 354.4L170.9 364.6M161.7 359.5L173.9 359.5" stroke-width="1.6"/>
<path d="M162 356l5 -2 6 1M163 364l6 1 5 -3" stroke-width="1.44" />
<path d="M166.2 365.5L166.2 374.4" stroke-width="1.03"/>
<text x="168" y="383.6" text-anchor="middle" font-size="9.4" class="lb">45</text>
<text x="207" y="374" text-anchor="middle" font-size="9.4" class="lb">47</text>
<path d="M207.6 374.6L207.6 379" stroke-width="1.03"/>
<text x="223.5" y="374" text-anchor="middle" font-size="9.4" class="lb">46</text>
<path d="M221.6 374.6L221.6 384" stroke-width="1.03"/>
<text x="167" y="399.2" text-anchor="middle" font-size="9.4" class="lb">44</text>
<path d="M172.5 395.4L185.6 395.4" stroke-width="1.03"/>
<path d="M202 384q1 -4.500 6 -4.500q4.500 .500 4.500 4l-.500 6l-5.500 1.500l-4 2.500M204.500 386q3 -3 6.500 -1.500M203.500 389.500l6 -3.500M202 392l8.500 -4.500M206 382.500q3.500 -.500 4.500 2" stroke-width="1.17" />
<path d="M217 386.500h13q1.500 2 0 4h-13q-1.500 -2 0 -4M219 386.500v4M221 386.500v4M223 386.500v4M225 386.500v4M227 386.500v4M229 386.500v4" stroke-width="0.99" />
<path d="M256.5 442.1L252.7 446.3L246.7 445.3L244.7 440.3L248.5 436.1L254.5 437.1Z" stroke-width="1.35"/><ellipse cx="250.6" cy="441.2" rx="3.3000000000000003" ry="3.0" stroke-width="1.22" fill="none"/><path d="M247.6 436.7L247.6 445.7M253.3 436.7L253.3 445.7M245.2 441.2L256.0 441.2" stroke-width="1.35"/>
<path d="M238.2 444.5L244.5 444.5" stroke-width="1.03"/>
<text x="233" y="448.4" text-anchor="middle" font-size="9.4" class="lb">43</text>
<path d="M252 451l4 -1.500l2.500 3l-2 3.500l-4 -1zM253 453l4.500 -.500M253.500 455l3 -.500" stroke-width="1.03" />
<path d="M243.6 454.5L251 454.5" stroke-width="1.03"/>
<text x="238" y="459" text-anchor="middle" font-size="9.4" class="lb">42</text>
<path d="M256 461l4 -2l3 1.500l.500 3l2 1l.500 3.500l-1.500 3l1 2.500l-2 2l-3 -1.500l-1 -3l-2.500 -1l-1 -3.500l1.500 -2.500zM257 465.500l6.500 -2M258.500 469.500l6 -2M260.500 473l5 -2M258.500 463l3 -1" stroke-width="1.03" />
<path d="M247.6 465.7L255 465.7" stroke-width="1.03"/>
<text x="242.3" y="470.7" text-anchor="middle" font-size="9.4" class="lb">41</text>
<text x="280.2" y="448" text-anchor="middle" font-size="9.4" class="lb">40</text>
<path d="M280.5 448.8L280.5 454.2" stroke-width="1.03"/>
<path d="M276 458l3.500 -2.500h3l2.500 2v3.500l-2 2h-5l-2 -2zM276.500 460h8M277.500 463.500q3 1.500 6.500 0M278 466q2.500 1.500 5.500 0M278.500 468.500q2 1.500 4.500 0M283 469l1 2l-1.500 1" stroke-width="1.08" />
<ellipse cx="267.6" cy="484" rx="3.6" ry="2.6" stroke-width="1.12" fill="none" transform="rotate(-15 267.6 484)"/>
<path d="M265 485l5 -2" stroke-width="0.9" />
<path d="M271.5 483.3L282.2 483.3" stroke-width="1.03"/>
<text x="288.3" y="488.7" text-anchor="middle" font-size="9.4" class="lb">39</text>
<path d="M282 471.500L277 473.500M274 474.800L269.900 476.200M264.700 476L267 479.500" stroke-width="0.9" />
<text x="180" y="441.3" text-anchor="middle" font-size="9.4" class="lb">35</text>
<path d="M180.2 442L180.2 449.4" stroke-width="1.03"/>
<path d="M186.5 455.1L183.2 458.1L178.7 457.0L177.5 452.9L180.8 449.9L185.3 451.0Z" stroke-width="1.3"/><ellipse cx="182" cy="454" rx="2.5850000000000004" ry="2.35" stroke-width="1.17" fill="none"/><path d="M179.7 450.5L179.7 457.5M184.1 450.5L184.1 457.5M177.8 454.0L186.2 454.0" stroke-width="1.3"/>
<text x="192.2" y="449" text-anchor="middle" font-size="9.4" class="lb">36</text>
<path d="M191.4 449.8L191.4 452.6" stroke-width="1.03"/>
<path d="M191.500 455l-2 2M189 458l-3 2.500M188 456.500l2 2.500" stroke-width="1.17" />
<text x="218.8" y="469" text-anchor="middle" font-size="9.4" class="lb">36</text>
<path d="M218.6 469.8L218.6 475.2" stroke-width="1.03"/>
<path d="M210.9 476.4L222.7 485.2M212.7 474.0L224.5 482.8M210.9 476.4L212.7 474.0M222.7 485.2L224.5 482.8M212.4 477.5L215.1 475.8M213.9 478.6L216.6 476.9M215.3 479.7L218.1 478.0M218.3 481.9L221.0 480.2M219.8 483.0L222.5 481.3M221.2 484.1L224.0 482.4" stroke-width="1"/>
<path d="M194.400 461.600L200 466M203 468.500L209 473M225.500 485.500L229 488M231 489.500L234.500 492.700" stroke-width="0.9" />
<path d="M157.500 469.400L157.500 487.500L167.900 492.700L171.700 497.200L174.300 494L192.400 488.200L195 481L200.200 475.900L202.100 471.300L195.500 463.500M157.500 469.400Q158.500 467 160.500 467.500L194.400 462.300Q196.500 462.300 195.500 463.500M158.200 479.800L200.900 470M195.700 480.400L208 486.900L204.700 492L197.600 487.500M158.500 481.500L167.900 492.700M169.800 467.500L169.200 477M179.500 466.800L180.200 474.500" stroke-width="1.03" />
<ellipse cx="160.5" cy="468.5" rx="1.3" ry="1" stroke-width="1.03" fill="none"/>
<ellipse cx="194.6" cy="462.6" rx="1.3" ry="1" stroke-width="1.03" fill="none"/>
<path d="M171 484q-3 -3 1.500 -4l10 -1.500q3 .500 2.500 3l-1 3.500q-1 2 -4 2.500l-7 1M178 477.500l8 6M190 484l3 1.500M188 487l1.500 3" stroke-width="0.99" />
<text x="141" y="480" text-anchor="middle" font-size="9.4" class="lb">37</text>
<path d="M148 476.5L156.2 476.5" stroke-width="1.03"/>
<path d="M60.800 536.600L65.300 531.400L91.200 519L92 514.500Q94 512 96 513.500L99 517" stroke-width="1.03" />
<ellipse cx="95" cy="516.5" rx="1.8" ry="2.6" stroke-width="0.99" fill="none" transform="rotate(-25 95 516.5)"/>
<ellipse cx="104.5" cy="524" rx="4.8" ry="10.6" stroke-width="1.03" fill="none" transform="rotate(-8 104.5 524)"/>
<ellipse cx="102.5" cy="524.3" rx="4" ry="9.5" stroke-width="1.03" fill="none" transform="rotate(-8 102.5 524.3)"/>
<ellipse cx="104.8" cy="523.8" rx="2.2" ry="5" stroke-width="0.9" fill="none" transform="rotate(-8 104.8 523.8)"/>
<path d="M64.600 544.300L90.500 528.200M67 546L88 533M92.400 536.600L102.800 531.400M66 548L80 545M66.500 551.600L80 549.600M66 555.500L79.500 553M91 541l8 -4.500" stroke-width="1.03" />
<path d="M53 538.500L62.500 537.500L65.300 543.500L65.300 560L62 565L53 565ZM55 539L55 565" stroke-width="1.03" />
<ellipse cx="60.4" cy="553.4" rx="3.3" ry="5.6" stroke-width="1.03" fill="none" transform="rotate(8 60.4 553.4)"/>
<ellipse cx="61" cy="541.5" rx="0.9" ry="0.9" stroke-width="1.03" fill="none"/>
<ellipse cx="61.5" cy="562" rx="0.9" ry="0.9" stroke-width="1.03" fill="none"/>
<ellipse cx="86.8" cy="547" rx="6.2" ry="13" stroke-width="1.5" fill="none" transform="rotate(12 86.8 547)"/><ellipse cx="87.1" cy="547" rx="3.4100000000000006" ry="6.24" stroke-width="1.24" fill="none" transform="rotate(12 87.1 547)"/><ellipse cx="87.1" cy="547" rx="1.9840000000000002" ry="3.9" stroke-width="0.93" fill="none" transform="rotate(12 87.1 547)"/><ellipse cx="89.0" cy="536.8" rx="0.9" ry="0.9" stroke-width="0.9" fill="none"/><ellipse cx="84.6" cy="557.2" rx="0.9" ry="0.9" stroke-width="0.9" fill="none"/>
<path d="M43.0 544.2L40.0 547.5L35.4 546.7L33.8 542.8L36.8 539.5L41.4 540.3Z" stroke-width="1.4"/><ellipse cx="38.4" cy="543.5" rx="2.5850000000000004" ry="2.35" stroke-width="1.26" fill="none"/><path d="M36.0 540.0L36.0 547.0M40.5 540.0L40.5 547.0M34.2 543.5L42.6 543.5" stroke-width="1.4"/>
<path d="M35.8 549L35.8 556.6" stroke-width="1.03"/>
<text x="35.2" y="565.9" text-anchor="middle" font-size="9.4" class="lb">35</text>
<ellipse cx="46.8" cy="549.7" rx="3.5" ry="3.5" stroke-width="1.08" fill="none"/>
<ellipse cx="46.8" cy="549.7" rx="1.4" ry="1.4" stroke-width="0.9" fill="none"/>
<path d="M47.4 553.6L47.4 566.3" stroke-width="1.03"/>
<text x="46.8" y="573.6" text-anchor="middle" font-size="9.4" class="lb">34</text>
<path d="M50.4 551.5L53 553.4" stroke-width="1.03"/>
<path d="M59.5 565L59.5 574" stroke-width="1.03"/>
<path d="M55.500 574.500h8l3 3v8l-3 3.500h-8l-3 -3.500v-8z" fill="#000" stroke-width="1"/>
<text x="59.500" y="585" text-anchor="middle" font-size="9.600" fill="#fff" stroke="#fff" stroke-width=".300" style="letter-spacing:-.3px">25</text>
<path d="M61.400 561.800L68 566.500M71 569L79.500 575.400" stroke-width="0.9" />
<path d="M89 560.500Q92.500 561 93.500 565.500Q97.500 571 96.500 577Q96 582.500 92.500 584.500Q91.500 588 88.500 588.300Q85.500 586.500 85 582.500Q82 577.500 82.500 571.500Q83 566.500 86 564.500Q87 561 89 560.500Z" stroke-width="1.08" />
<ellipse cx="89.7" cy="574.4" rx="3.5" ry="6.2" stroke-width="1.08" fill="none" transform="rotate(5 89.7 574.4)"/>
<ellipse cx="89.7" cy="574.4" rx="2" ry="4.2" stroke-width="0.9" fill="none" transform="rotate(5 89.7 574.4)"/>
<ellipse cx="89" cy="563.8" rx="1.1" ry="1.1" stroke-width="1.03" fill="none"/>
<ellipse cx="89" cy="585.2" rx="1.1" ry="1.1" stroke-width="1.03" fill="none"/>
<path d="M83 572v5M84 580l2 1M93 584l3 2" stroke-width="1.08" />
<path d="M87.3 588.5L87.3 599.3" stroke-width="1.03"/>
<text x="88.2" y="607.9" text-anchor="middle" font-size="9.4" class="lb">33</text>
<path d="M61.400 607.700v2.300" stroke-width="1.08" />
<ellipse cx="120" cy="519.5" rx="6.3" ry="14.3" stroke-width="1.03" fill="none" transform="rotate(-6 120 519.5)"/>
<ellipse cx="119.3" cy="519.5" rx="4.3" ry="12.3" stroke-width="1.03" fill="none" transform="rotate(-6 119.3 519.5)"/>
<path d="M116.500 506.500q2 -3.500 6 -2.500M118 507l4.500 -1.500" stroke-width="1.08" />
<path d="M111.200 502.300L115 506M118.300 509.400L130 515.900L130 532.700L133.800 534.600" stroke-width="0.9" />
<path d="M120.6 534.8L120.6 539.8" stroke-width="1.03"/>
<text x="122" y="549.1" text-anchor="middle" font-size="9.4" class="lb">29</text>
<ellipse cx="137.5" cy="518.2" rx="3.6" ry="13" stroke-width="1.08" fill="none" transform="rotate(-6 137.5 518.2)"/>
<ellipse cx="141.2" cy="518.2" rx="3.6" ry="13" stroke-width="1.08" fill="none" transform="rotate(-6 141.2 518.2)"/>
<ellipse cx="144.9" cy="518.2" rx="3.6" ry="13" stroke-width="1.08" fill="none" transform="rotate(-6 144.9 518.2)"/>
<ellipse cx="148.6" cy="518.2" rx="3.6" ry="13" stroke-width="1.08" fill="none" transform="rotate(-6 148.6 518.2)"/>
<ellipse cx="152.3" cy="518.2" rx="3.6" ry="13" stroke-width="1.08" fill="none" transform="rotate(-6 152.3 518.2)"/>
<path d="M137 505.500q8 -2.500 15 0M138 531q8 2.500 15 -.500M133.500 519.500h-3" stroke-width="1.08" />
<path d="M139 510l3 12M143 508l4 16M147 508l4 14M151 510l2.500 9" stroke-width="0.9" />
<path d="M154.5 527.5L157.8 532.7" stroke-width="1.03"/>
<text x="159.8" y="543.3" text-anchor="middle" font-size="9.4" class="lb">27</text>
<ellipse cx="164.6" cy="513.7" rx="4.3" ry="8.7" stroke-width="1.03" fill="none" transform="rotate(-3 164.6 513.7)"/>
<ellipse cx="165.5" cy="513.7" rx="2.6" ry="7" stroke-width="0.9" fill="none" transform="rotate(-3 165.5 513.7)"/>
<path d="M164.500 505L173.200 504.500Q177.500 506 177.300 513Q177 519.500 174 521.200L164.800 522.400" stroke-width="1.03" />
<path d="M173.3 522.3L173.3 532" stroke-width="1.03"/>
<text x="173" y="540.8" text-anchor="middle" font-size="9.4" class="lb">28</text>
<ellipse cx="187.6" cy="508.8" rx="7.2" ry="14.6" stroke-width="1.03" fill="none" transform="rotate(-8 187.6 508.8)"/>
<ellipse cx="186.6" cy="508.8" rx="4.8" ry="12.4" stroke-width="1.03" fill="none" transform="rotate(-8 186.6 508.8)"/>
<ellipse cx="186" cy="508.8" rx="2.5" ry="9.5" stroke-width="0.9" fill="none" transform="rotate(-8 186 508.8)"/>
<path d="M183 496q2 -2.500 5 -1.500l1.500 2M184.500 497l4 -1" stroke-width="1.08" />
<path d="M197.600 509.500L204.700 508.200M196.300 505.600L198.200 523.700" stroke-width="0.9" />
<path d="M186.6 523.9L186.6 529.6" stroke-width="1.03"/>
<text x="187.5" y="538.3" text-anchor="middle" font-size="9.4" class="lb">29</text>
<path d="M135.1 538.9L149.1 550.6M136.9 536.7L150.9 548.4M135.1 538.9L136.9 536.7M149.1 550.6L150.9 548.4M136.7 540.2L139.4 538.8M138.2 541.5L140.9 540.1M139.8 542.8L142.5 541.4M144.4 546.7L147.2 545.3M146.0 548.0L148.7 546.6M147.5 549.3L150.3 547.9" stroke-width="1"/>
<path d="M149.400 551l3 -3l4 2l-1 3.500l-3.500 1z" stroke-width="1.08" />
<path d="M151.7 555L151.7 564.4" stroke-width="1.03"/>
<text x="152" y="573.7" text-anchor="middle" font-size="9.4" class="lb">38</text>
<path d="M202.1 527.6L217.1 539.6M203.9 525.4L218.9 537.4M202.1 527.6L203.9 525.4M217.1 539.6L218.9 537.4M203.8 528.9L206.5 527.5M205.5 530.3L208.1 528.8M207.1 531.6L209.8 530.2M212.1 535.6L214.8 534.2M213.8 536.9L216.5 535.5M215.5 538.3L218.1 536.8" stroke-width="1"/>
<path d="M217.500 540.500l3 -2.500l4 2l-1 3.500l-3.500 1z" stroke-width="1.08" />
<path d="M221.3 546L221.3 553" stroke-width="1.03"/>
<text x="221" y="561.7" text-anchor="middle" font-size="9.4" class="lb">30</text>
<ellipse cx="214.4" cy="506.3" rx="6.1" ry="9.9" stroke-width="1.03" fill="none" transform="rotate(-5 214.4 506.3)"/>
<ellipse cx="213.5" cy="506.5" rx="3.2" ry="6.5" stroke-width="1.03" fill="none" transform="rotate(-5 213.5 506.5)"/>
<ellipse cx="213" cy="506.5" rx="1.5" ry="3.5" stroke-width="0.9" fill="none" transform="rotate(-5 213 506.5)"/>
<path d="M218.300 497.200L233.600 495L234 491.500Q236 489 238.500 490.500L240 495L251.700 491.700L252.500 488.500Q254.500 486.500 257 488L258.900 491.700L270.500 493L277.600 497" stroke-width="1.03" />
<ellipse cx="236.8" cy="493.2" rx="1.6" ry="2.5" stroke-width="0.99" fill="none" transform="rotate(-25 236.8 493.2)"/>
<ellipse cx="255.6" cy="490.6" rx="1.6" ry="2.5" stroke-width="0.99" fill="none" transform="rotate(-25 255.6 490.6)"/>
<ellipse cx="232.6" cy="501.5" rx="3.6" ry="2.2" stroke-width="0.99" fill="none" transform="rotate(-8 232.6 501.5)"/>
<path d="M235.600 501.400L258.900 497L272.400 497.600L277.600 502" stroke-width="1.03" />
<path d="M220 512.500L226.500 514M238.800 509.800L252 506M238.800 514.600L251.700 512M238.800 517.600L251.300 515.700M264 509.200L278.300 506.600M264 512.400L278.300 510.500M264.700 518.900L270 521.500L278.300 517.600M238.800 508.500L253 504.500" stroke-width="1.03" />
<ellipse cx="232.3" cy="519.7" rx="6.3" ry="12.8" stroke-width="1.5" fill="none" transform="rotate(8 232.3 519.7)"/><ellipse cx="232.60000000000002" cy="519.7" rx="3.4650000000000003" ry="6.144" stroke-width="1.24" fill="none" transform="rotate(8 232.60000000000002 519.7)"/><ellipse cx="232.60000000000002" cy="519.7" rx="2.016" ry="3.84" stroke-width="0.93" fill="none" transform="rotate(8 232.60000000000002 519.7)"/><ellipse cx="233.7" cy="509.6" rx="0.9" ry="0.9" stroke-width="0.9" fill="none"/><ellipse cx="230.9" cy="529.8" rx="0.9" ry="0.9" stroke-width="0.9" fill="none"/>
<ellipse cx="257.9" cy="513.6" rx="6.1" ry="12.4" stroke-width="1.5" fill="none" transform="rotate(6 257.9 513.6)"/><ellipse cx="258.2" cy="513.6" rx="3.355" ry="5.952" stroke-width="1.24" fill="none" transform="rotate(6 258.2 513.6)"/><ellipse cx="258.2" cy="513.6" rx="1.952" ry="3.7199999999999998" stroke-width="0.93" fill="none" transform="rotate(6 258.2 513.6)"/><ellipse cx="258.9" cy="503.7" rx="0.9" ry="0.9" stroke-width="0.9" fill="none"/><ellipse cx="256.9" cy="523.5" rx="0.9" ry="0.9" stroke-width="0.9" fill="none"/>
<ellipse cx="283.8" cy="508.2" rx="5.4" ry="12.2" stroke-width="1.5" fill="none" transform="rotate(4 283.8 508.2)"/><ellipse cx="284.1" cy="508.2" rx="2.9700000000000006" ry="5.856" stroke-width="1.24" fill="none" transform="rotate(4 284.1 508.2)"/><ellipse cx="284.1" cy="508.2" rx="1.7280000000000002" ry="3.6599999999999997" stroke-width="0.93" fill="none" transform="rotate(4 284.1 508.2)"/><ellipse cx="284.5" cy="498.5" rx="0.9" ry="0.9" stroke-width="0.9" fill="none"/><ellipse cx="283.1" cy="517.9" rx="0.9" ry="0.9" stroke-width="0.9" fill="none"/>
<path d="M289.300 499.500L292 499L300.300 508.600L297 513.700L288 519" stroke-width="1.03" />
<ellipse cx="295" cy="508.6" rx="1.6" ry="1.8" stroke-width="1.03" fill="none"/>
<path d="M258.5 527.4L258.5 534.9" stroke-width="1.03"/>
<text x="257.2" y="546.7" text-anchor="middle" font-size="9.4" class="lb">26</text>
<path d="M301.9 514.8L316.9 526.8M304.1 512.2L319.1 524.2M301.9 514.8L304.1 512.2M316.9 526.8L319.1 524.2M303.8 516.3L306.9 514.4M305.7 517.8L308.7 515.9M307.6 519.3L310.6 517.4M311.3 522.3L314.4 520.4M313.2 523.8L316.2 521.9M315.1 525.3L318.1 523.4" stroke-width="1"/>
<path d="M307.4 522.8L307.4 528.5" stroke-width="1.03"/>
<text x="307.4" y="537.6" text-anchor="middle" font-size="9.4" class="lb">31</text>
<path d="M328.9 529.5L325.9 532.8L321.3 532.0L319.7 528.1L322.7 524.8L327.3 525.6Z" stroke-width="1.4"/><ellipse cx="324.3" cy="528.8" rx="2.5850000000000004" ry="2.35" stroke-width="1.26" fill="none"/><path d="M321.9 525.3L321.9 532.3M326.4 525.3L326.4 532.3M320.1 528.8L328.5 528.8" stroke-width="1.4"/>
<path d="M323.3 535L323.3 539.5" stroke-width="1.03"/>
<text x="324" y="551.2" text-anchor="middle" font-size="9.4" class="lb">32</text>
<text x="300" y="609" font-size="6" fill="#000" stroke="#000" stroke-width=".250" textLength="52" lengthAdjust="spacingAndGlyphs">V00 44-88 &#160; 1-91</text>
</svg>
<div id="split" class="abs"></div>
<div id="rp" class="abs"></div>
<div class="abs lbl" style="left:407px;top:96px">Modell / Baujahr</div>
<div class="abs lbl" style="left:407px;top:128px">Fahrgestell-Nr.</div>
<div class="abs lbl" style="left:407px;top:160px">Hauptgruppe</div>
<div class="abs fld" style="left:527px;top:92px;width:630px">Audi 100/Avant</div>
<div class="abs fld" style="left:1165px;top:92px;width:80px;padding-left:5px">1990</div>
<div class="abs fld" style="left:527px;top:124px;width:720px"></div>
<div class="abs fld" style="left:527px;top:156px;width:720px">2&nbsp;&nbsp; Kraftstoffbehaelter und Rohre, Abgasanlage, Heizung</div>
<div class="abs fld" style="left:407px;top:188px;width:105px;text-align:center;padding-left:0;letter-spacing:-.2px">047-15</div>
<div class="abs fld" style="left:527px;top:188px;width:720px;height:54px">Abgaskruemmer</div>
<div id="lv" class="abs"></div>
<div class="abs" style="left:409px;top:273px;width:828px;height:33px;background:#ffffe1"></div>
<div class="hd" style="left:409px;width:37px">Pos</div>
<div class="hd" style="left:446px;width:99px">Teilenummer</div>
<div class="hd" style="left:545px;width:202px">Benennung</div>
<div class="hd" style="left:747px;width:107px">Bemerkung</div>
<div class="hd" style="left:854px;width:45px;letter-spacing:.1px">Stück</div>
<div class="hd" style="left:899px;width:101px">Modellangabe</div>
<div class="hd" style="left:1000px;width:240px"></div>
<div class="row g" style="top:274px"><span class="c3">Abgaskruemmer</span><span class="c4 dg">2,23/2,3Ltr.</span><span class="c6">5-Zylinder:</span></div>
<div class="row g" style="top:290px"><span class="c6">KU,NF</span></div>
<div class="row sel" style="top:306px"><span class="c1">25</span><span class="c2">054 129 591</span><span class="c3">Abgaskruemmer</span><span class="c4">Zylinder 1,2</span><span class="c5">1</span></div>
<div class="row " style="top:322px"><span class="c1">26</span><span class="c2">054 129 592 A</span><span class="c3">Abgaskruemmer</span><span class="c4">Zylinder 3-5</span><span class="c5">1</span></div>
<div class="row " style="top:338px"><span class="c3" style="width:190px;text-align:right">mitverwenden:</span><span class="c4 dg">N&nbsp;&nbsp;&nbsp;013 844 4</span><span class="c5">1</span><span class="c6">KU</span></div>
<div class="row " style="top:354px"><span class="c4 dg">N&nbsp;&nbsp;&nbsp;016 156 3</span><span class="c5">1</span><span class="c6">KU</span></div>
<div class="row " style="top:370px"><span class="c1">27</span><span class="c2">054 129 903</span><span class="c3">Wellrohr</span><span class="c5">1</span></div>
<div class="row " style="top:386px"><span class="c1">28</span><span class="c2">054 129 995</span><span class="c3">Zwischenrohr</span><span class="c5">1</span></div>
<div class="row " style="top:402px"><span class="c1">29</span><span class="c2">054 129 933</span><span class="c3">Klemmschelle</span><span class="c5">2</span></div>
<div class="row " style="top:418px"><span class="c1">30</span><span class="c2">N&nbsp;&nbsp;&nbsp;010 220 12</span><span class="c3">Sechskantschraube</span><span class="c4 dg">M6X30</span><span class="c5">2</span></div>
<div class="row " style="top:434px"><span class="c1">31</span><span class="c2">N&nbsp;&nbsp;&nbsp;044 520 3</span><span class="c3">Stiftschraube</span><span class="c4 dg">M10X28</span><span class="c5">4</span></div>
<div class="row " style="top:450px"><span class="c1">32</span><span class="c2">N&nbsp;&nbsp;&nbsp;903 690 01</span><span class="c3">Sechskantmutter,selbstsichernd</span><span class="c4">MM10</span><span class="c5">4</span></div>
<div class="row " style="top:466px"><span class="c1">33</span><span class="c2">028 129 589 B</span><span class="c3">Dichtung</span><span class="c5">5</span></div>
<div class="row " style="top:482px"><span class="c1">34</span><span class="c2">N&nbsp;&nbsp;&nbsp;011 558 11</span><span class="c3">Scheibe</span><span class="c4 dg">8,4X15X1,6</span><span class="c5">10</span></div>
<div class="row " style="top:498px"><span class="c1">35</span><span class="c2">N&nbsp;&nbsp;&nbsp;900 850 01</span><span class="c3">Sechskantmutter,selbstsichernd</span><span class="c4">M8</span><span class="c5">13</span></div>
<div class="row " style="top:514px"><span class="c1">36</span><span class="c2">N&nbsp;&nbsp;&nbsp;044 511 3</span><span class="c3">Stiftschraube</span><span class="c4 dg">M8X18</span><span class="c5">4</span></div>
<div class="row " style="top:530px"><span class="c1">37</span><span class="c2">054 129 595 A</span><span class="c3">Warmluftfangblech</span><span class="c5">1</span></div>
<div class="row " style="top:546px"><span class="c1">38</span><span class="c2">N&nbsp;&nbsp;&nbsp;012 241 11</span><span class="c3">Federscheibe</span><span class="c4 dg">B8X15X0,8</span><span class="c5">3</span></div>
<div class="row " style="top:562px"><span class="c1">39</span><span class="c2">N&nbsp;&nbsp;&nbsp;013 844 4</span><span class="c3">Dichtring</span><span class="c4 dg">16X20X1,5</span><span class="c5">1</span><span class="c6">KU</span></div>
<div class="row " style="top:578px"><span class="c1">40</span><span class="c2">N&nbsp;&nbsp;&nbsp;016 156 3</span><span class="c3">Verschlussschraube</span><span class="c4 dg">M16X1,5</span><span class="c5">1</span><span class="c6">KU</span></div>
<div class="row " style="top:594px"><span class="c1">41</span><span class="c2">035 129 637 D</span><span class="c3">Schraubstutzen</span><span class="c4 dg">M16X1,5/14X1,5</span><span class="c5">1</span><span class="c6">NF</span></div>
<div class="row " style="top:610px"><span class="c1">42</span><span class="c2">N&nbsp;&nbsp;&nbsp;020 829 2</span><span class="c3">Schneidring</span><span class="c4">S8</span><span class="c5">1</span><span class="c6">NF</span></div>
<div class="row " style="top:626px"><span class="c1">43</span><span class="c2">N&nbsp;&nbsp;&nbsp;021 022 2</span><span class="c3">Ueberwurfmutter</span><span class="c4">AL8</span><span class="c5">1</span><span class="c6">NF</span></div>
<div class="row " style="top:642px"><span class="c1">44</span><span class="c2">034 129 703 F</span><span class="c3">Rohr fuer CO-Entnahme</span><span class="c5">1</span><span class="c6">NF</span></div>
<div class="row " style="top:658px"><span class="c1">45</span><span class="c2">034 133 335 D</span><span class="c3">Verschlusskappe</span><span class="c4 dg">7</span><span class="c5">1</span><span class="c6">NF</span></div>
<div class="row " style="top:674px"><span class="c1">46</span><span class="c2">N&nbsp;&nbsp;&nbsp;014 505 2</span><span class="c3">Stiftschraube</span><span class="c4">AM6AX24</span><span class="c5">1</span><span class="c6">NF</span></div>
<div class="abs" style="left:409px;top:680px;width:828px;height:1px;background:#e2e2e2"></div>
</body></html>
